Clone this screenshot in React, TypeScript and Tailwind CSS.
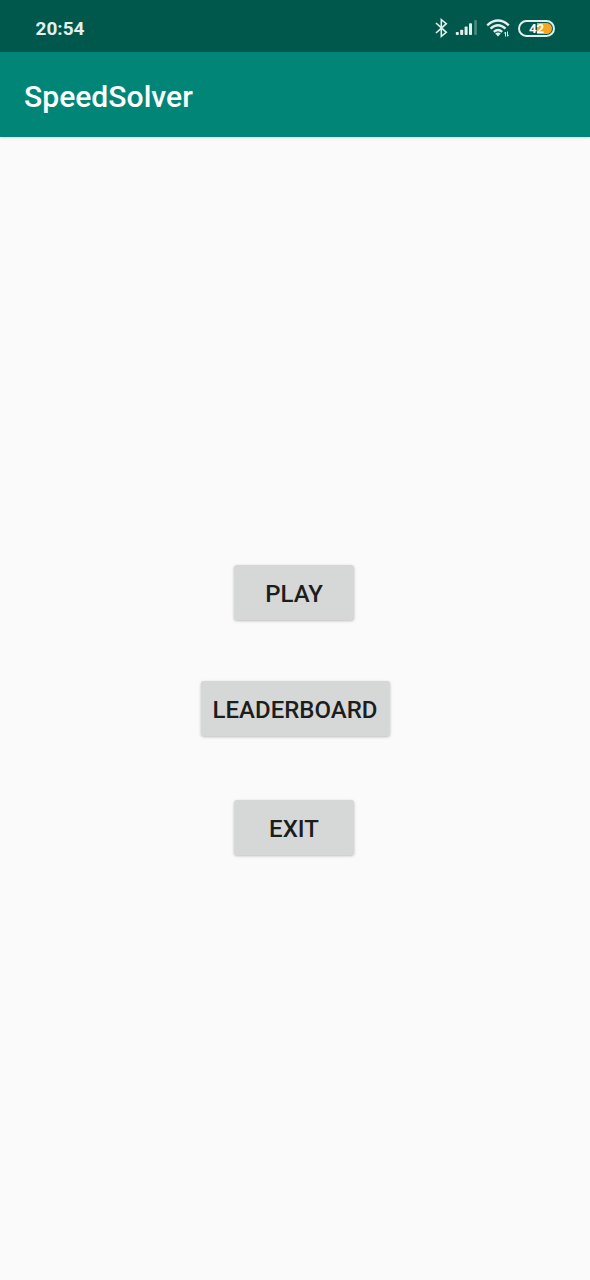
import React from "react";

function StatusIcons() {
  return (
    <div className="flex items-center text-[#e2efed]">
      <svg width="14" height="22" viewBox="0 0 14 22" fill="none" stroke="currentColor" strokeWidth="1.6" className="mr-[7px]">
        <path d="M2 6 L12.3 15.3 L7.3 19.3 V2.7 L12.3 6.7 L2 16" />
      </svg>
      <svg width="23" height="18" viewBox="0 0 23 18" fill="currentColor" className="mr-2">
        <rect x="0.8" y="13" width="3" height="3" rx="0.8" />
        <rect x="5.2" y="10.8" width="3" height="5.2" rx="0.8" />
        <rect x="9.6" y="7.5" width="3" height="8.5" rx="0.8" />
        <rect x="14" y="4.2" width="3" height="11.8" rx="0.8" />
        <rect x="19.3" y="1" width="2.5" height="15" rx="0.8" opacity="0.35" />
      </svg>
      <svg width="25" height="20" viewBox="0 0 25 20" fill="none" stroke="currentColor" strokeWidth="2.3" className="mr-[7px]">
        <path d="M1.2 7.3 Q12 -2.2 22.8 7.3" />
        <path d="M4.5 10.7 Q12 3.9 19.5 10.7" />
        <path d="M7.8 13.9 Q12 10.1 16.2 13.9" />
        <path d="M9.2 15.6 Q12 13.5 14.8 15.6 L12 18.4 Z" fill="currentColor" stroke="none" />
        <path d="M19.5 18.5 V14 L18.3 15.5 M21.5 13.5 V18.3 L22.7 16.8" strokeWidth="1" />
      </svg>
      <div className="relative h-[17px] w-[37px] overflow-hidden rounded-full border-2 border-[#e2efed]">
        <div className="absolute top-[1px] right-[1px] bottom-[1px] w-[15px] rounded-r-full bg-[#f6a623]" />
        <span className="absolute -top-px left-[9px] text-[13.5px] leading-[14px] font-bold tracking-[-0.2px] text-white">42</span>
      </div>
    </div>
  );
}

const buttonClass =
  "flex h-[55px] items-center justify-center rounded-[3px] bg-[#d6d8d7] pt-[2px] text-[24px] leading-none font-medium text-[#1c1e1d] shadow-[0_1px_3px_rgba(0,0,0,0.25)]";

export default function App() {
  return (
    <div className="flex h-[1280px] w-[590px] flex-col bg-[#fafafa] font-['Roboto',sans-serif]">
      <div className="flex h-[52px] shrink-0 items-center justify-between bg-[#00574b] pt-1 pr-[35px] pl-[35.5px]">
        <span className="text-[19px] leading-none font-bold text-[#e2efed]">20:54</span>
        <StatusIcons />
      </div>
      <header className="flex h-[85px] shrink-0 items-center bg-[#008577] pt-[5px] pl-6 shadow-[0_1px_2px_rgba(0,0,0,0.12)]">
        <h1 className="text-[30.1px] leading-none font-medium text-white">SpeedSolver</h1>
      </header>
      <main className="flex flex-col items-center pt-[428px]">
        <button className={`${buttonClass} mr-[2px] w-[120px]`}>PLAY</button>
        <button className={`${buttonClass} mt-[61px] w-[189px]`}>LEADERBOARD</button>
        <button className={`${buttonClass} mt-16 mr-[2px] w-[120px]`}>EXIT</button>
      </main>
    </div>
  );
}
